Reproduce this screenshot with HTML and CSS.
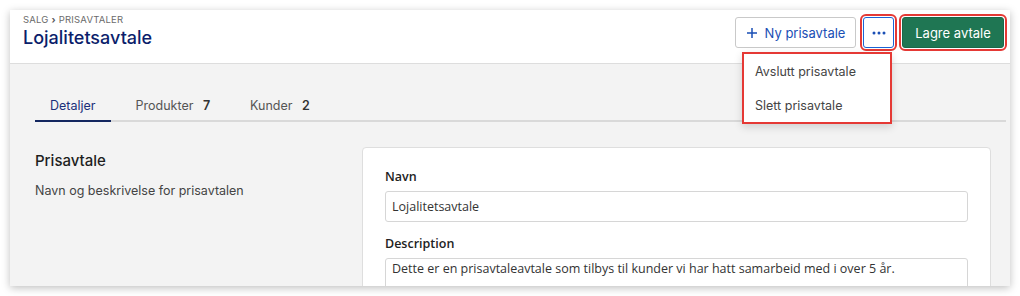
FILE: index.html
```html
<!DOCTYPE html>
<html lang="no">
<head>
  <meta charset="UTF-8">
  <meta name="viewport" content="width=device-width, initial-scale=1.0">
  <title>Lojalitetsavtale</title>
  <link rel="stylesheet" href="styles.css">
</head>
<body>
  <div class="window">
    <div class="header">
      <div class="titles">
        <div class="breadcrumb">SALG <span class="sep">&#8250;</span> PRISAVTALER</div>
        <h1>Lojalitetsavtale</h1>
      </div>
      <div class="actions">
        <button class="button secondary">
          <svg width="12" height="12" viewBox="0 0 12 12"><path d="M6 1v10M1 6h10" stroke="#1a4fb5" stroke-width="1.5" fill="none"/></svg>
          Ny prisavtale
        </button>
        <button class="button more marked">
          <svg width="14" height="4" viewBox="0 0 14 4"><circle cx="2" cy="2" r="1.5" fill="#1a4fb5"/><circle cx="7" cy="2" r="1.5" fill="#1a4fb5"/><circle cx="12" cy="2" r="1.5" fill="#1a4fb5"/></svg>
        </button>
        <button class="button primary marked">Lagre avtale</button>
      </div>
    </div>

    <div class="menu">
      <div class="menu-item">Avslutt prisavtale</div>
      <div class="menu-item">Slett prisavtale</div>
    </div>

    <div class="main-content">
      <div class="tabs">
        <div class="tab active">Detaljer</div>
        <div class="tab">Produkter <span class="count">7</span></div>
        <div class="tab">Kunder <span class="count">2</span></div>
      </div>

      <div class="section">
        <div class="section-info">
          <h2>Prisavtale</h2>
          <p>Navn og beskrivelse for prisavtalen</p>
        </div>
        <div class="card">
          <label>Navn</label>
          <div class="input">Lojalitetsavtale</div>
          <label>Description</label>
          <div class="input textarea">Dette er en prisavtaleavtale som tilbys til kunder vi har hatt samarbeid med i over 5 år.</div>
        </div>
      </div>
    </div>
  </div>
</body>
</html>
```

FILE: styles.css
```css
body {
  margin: 0;
  padding: 10px;
  background-color: #ffffff;
  font-family: Inter, "Open Sans", Arial, sans-serif;
  color: #222222;
}
.window {
  position: relative;
  height: 276px;
  overflow: hidden;
  background-color: #f3f3f3;
  box-shadow: 0 2px 8px rgba(0, 0, 0, 0.25);
}
.header {
  display: flex;
  justify-content: space-between;
  height: 53px;
  padding: 0 6px 0 13px;
  background-color: #ffffff;
  border-bottom: 1px solid #dddddd;
}
.titles {
  padding-top: 4px;
}
.breadcrumb {
  font-size: 9.5px;
  color: #6b6b6b;
  letter-spacing: 0.2px;
}
.breadcrumb .sep {
  font-weight: bold;
  color: #555555;
}
h1 {
  margin: 2px 0 0;
  font-size: 18px;
  font-weight: 500;
  color: #0b1e6b;
}
.actions {
  display: flex;
  align-items: flex-start;
  padding-top: 7px;
}
.button {
  height: 31px;
  font-family: Inter, Arial, sans-serif;
  font-size: 13px;
  border-radius: 3px;
  display: inline-flex;
  align-items: center;
  justify-content: center;
  gap: 7px;
  cursor: pointer;
}
.secondary {
  width: 121px;
  background-color: #ffffff;
  border: 1px solid #c9c9c9;
  color: #1a4fb5;
  margin-right: 7px;
}
.more {
  width: 31px;
  background-color: #ffffff;
  border: 1px solid #1a64d6;
  padding: 0;
  margin-right: 8px;
}
.primary {
  width: 102px;
  background-color: #1f7653;
  border: 1px solid #1a6849;
  color: #ffffff;
  font-size: 13px;
}
.marked {
  outline: 2px solid #e53935;
  outline-offset: 1px;
}
.menu {
  position: absolute;
  top: 42px;
  left: 732px;
  width: 146px;
  height: 68px;
  background-color: #ffffff;
  border: 2px solid #e53935;
  box-shadow: 0 3px 8px rgba(0, 0, 0, 0.15);
  z-index: 2;
}
.menu-item {
  height: 34px;
  line-height: 36px;
  padding-left: 11px;
  font-size: 12.5px;
  color: #444444;
}
.main-content {
  padding: 0 4px 0 25px;
}
.tabs {
  display: flex;
  margin-top: 34px;
  border-bottom: 2px solid #d9d9d9;
}
.tab {
  padding: 0 15px 7px;
  margin-right: 10px;
  margin-bottom: -2px;
  font-size: 12.5px;
  color: #555555;
}
.tab.active {
  color: #1a2f7a;
  border-bottom: 2px solid #13265f;
}
.count {
  margin-left: 6px;
  font-weight: 600;
  color: #333333;
}
.section {
  display: flex;
  margin-top: 25px;
  padding-right: 15px;
}
.section-info {
  width: 327px;
}
h2 {
  margin: 4px 0 0;
  font-size: 15px;
  font-weight: 500;
  color: #1e1e1e;
}
.section-info p {
  margin: 13px 0 0;
  font-size: 12.5px;
  color: #444444;
}
.card {
  flex: 1;
  height: 160px;
  background-color: #ffffff;
  border: 1px solid #dedede;
  border-radius: 4px;
  padding: 20px 22px 0;
  font-family: "Open Sans", Arial, sans-serif;
}
.card label {
  display: block;
  font-size: 12.5px;
  font-weight: 600;
  color: #222222;
  margin-bottom: 6px;
}
.input {
  height: 29px;
  line-height: 29px;
  border: 1px solid #d6d6d6;
  border-radius: 3px;
  padding: 0 6px;
  font-size: 12.5px;
  color: #333333;
  margin-bottom: 13px;
}
.textarea {
  height: 40px;
  line-height: 20px;
}
```
